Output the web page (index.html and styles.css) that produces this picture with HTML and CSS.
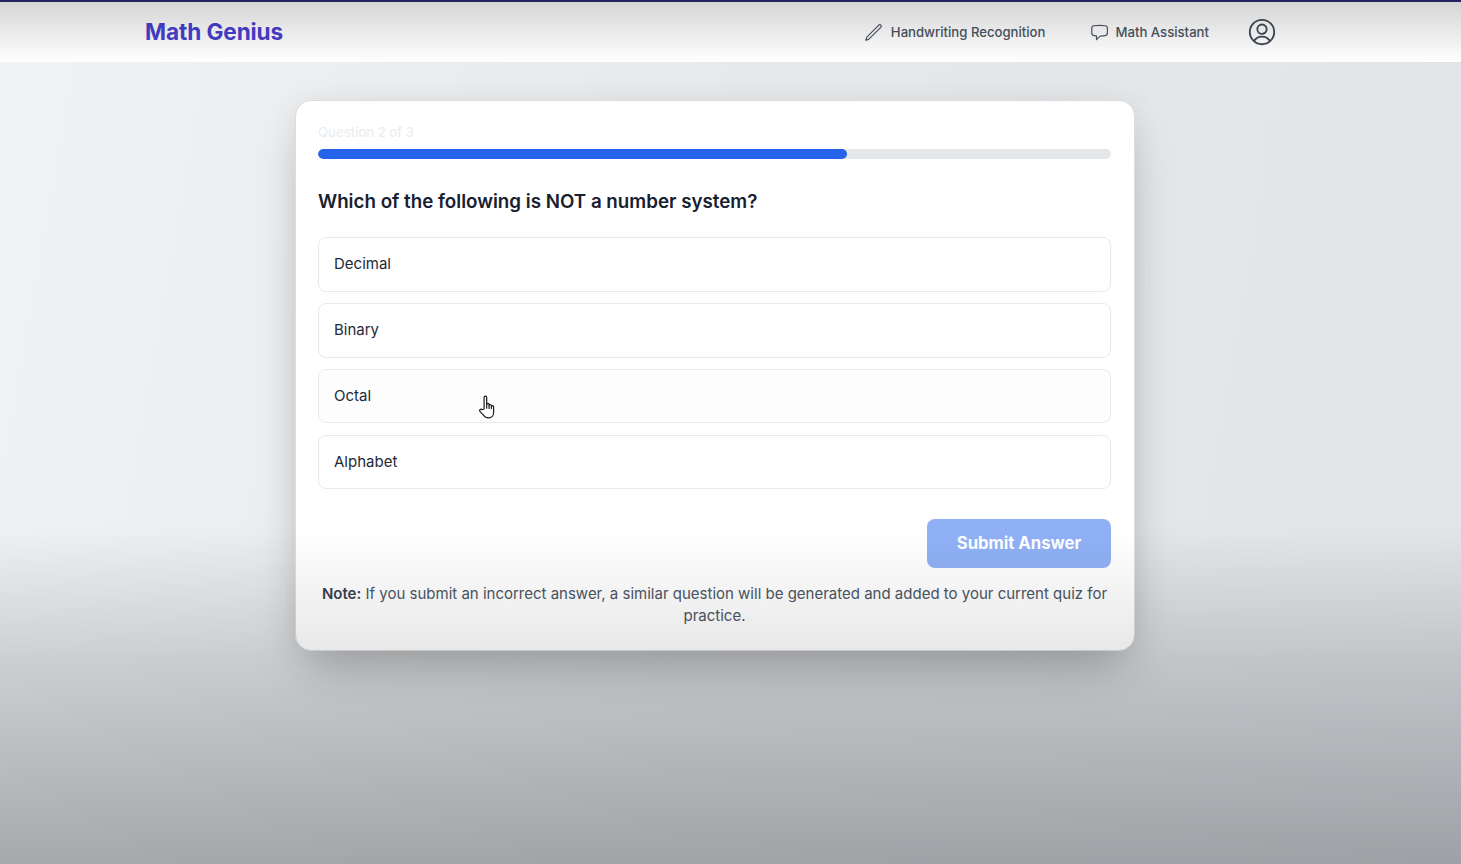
FILE: index.html
```html
<!DOCTYPE html>
<html lang="en">
<head>
<meta charset="utf-8">
<title>Math Genius</title>
<link rel="stylesheet" href="styles.css">
</head>
<body>
<header class="navbar">
  <div class="nav-inner">
    <a class="brand">Math Genius</a>
    <nav class="nav-links">
      <a class="nav-link nav-hand">
        <svg class="nav-icon" viewBox="0 0 24 24" fill="none" stroke="currentColor" stroke-width="1.5" stroke-linecap="round" stroke-linejoin="round"><path d="M16.86 4.49l1.69-1.69a1.88 1.88 0 1 1 2.65 2.65L6.83 19.82a4.5 4.5 0 0 1-1.9 1.13L2.25 21.75l.8-2.68a4.5 4.5 0 0 1 1.13-1.9L16.86 4.49z"/></svg>
        <span>Handwriting Recognition</span>
      </a>
      <a class="nav-link nav-math">
        <svg class="nav-icon" viewBox="0 0 24 24" fill="none" stroke="currentColor" stroke-width="1.5" stroke-linecap="round" stroke-linejoin="round"><path d="M2.25 12.76c0 1.6 1.12 2.99 2.7 3.23 1.08.16 2.17.28 3.27.37V21l4.18-4.18a1.1 1.1 0 0 1 .78-.33c2.05-.05 4.09-.22 6.08-.52 1.58-.23 2.7-1.62 2.7-3.22V6.74c0-1.6-1.12-2.99-2.7-3.23A48.4 48.4 0 0 0 12 3c-2.39 0-4.74.18-7.05.51-1.58.24-2.7 1.63-2.7 3.23v6.02z"/></svg>
        <span>Math Assistant</span>
      </a>
      <a class="nav-user">
        <svg viewBox="0 0 24 24" fill="none" stroke="currentColor" stroke-width="1.5" stroke-linecap="round" stroke-linejoin="round"><path d="M15.75 9.75a3.75 3.75 0 1 1-7.5 0 3.75 3.75 0 0 1 7.5 0z"/><path d="M5.98 18.73A7.49 7.49 0 0 1 12 15.75a7.49 7.49 0 0 1 6.02 2.98"/><circle cx="12" cy="12" r="9.75"/></svg>
      </a>
    </nav>
  </div>
</header>

<main class="page">
  <section class="card">
    <div class="progress-label">Question 2 of 3</div>
    <div class="progress-track"><div class="progress-fill"></div></div>
    <h2 class="question">Which of the following is NOT a number system?</h2>
    <div class="options">
      <button class="option">Decimal</button>
      <button class="option">Binary</button>
      <button class="option option-hover">Octal</button>
      <button class="option">Alphabet</button>
    </div>
    <div class="actions">
      <button class="submit">Submit Answer</button>
    </div>
    <p class="note"><strong>Note:</strong> If you submit an incorrect answer, a similar question will be generated and added to your current quiz for practice.</p>
  </section>
</main>

<div class="shade"></div>

<svg class="cursor" viewBox="0 0 18 24" fill="#fff" stroke="#1a1a1a" stroke-width="1.2" stroke-linejoin="round" stroke-linecap="round"><path d="M5.6 14V2.6c0-2 2.6-2 2.6 0V9.6c0-1.6 2.4-1.6 2.4 0v1c0-1.5 2.3-1.5 2.3 0v1c0-1.4 2.2-1.4 2.2.2v5.8c0 3-2 5.3-5 5.3-2.6 0-4-1-5-2.6L1.4 16.4c-1-1.5.9-2.9 2.2-1.7z"/><path d="M8.2 9.6v3.6M10.6 10.6v2.8M12.9 11.6v2"/></svg>
</body>
</html>
```

FILE: styles.css
```css
* { box-sizing: border-box; }
html, body { margin: 0; height: 100%; }
body {
  width: 1461px;
  height: 864px;
  overflow: hidden;
  position: relative;
  font-family: Inter, "Liberation Sans", sans-serif;
  background:
    linear-gradient(to bottom, rgba(30,50,70,0) 520px, rgba(30,50,70,.06) 660px, rgba(30,50,70,.03) 864px),
    linear-gradient(100deg, #f1f2f3 0%, #e6e8ea 50%, #e2e4e7 100%);
  color: #111827;
}
.navbar {
  height: 62px;
  background: #ffffff;
  border-top: 2px solid #2d2a6e;
}
.nav-inner {
  height: 60px;
  padding: 0 184px 0 145px;
  display: flex;
  align-items: center;
  justify-content: space-between;
}
.brand { margin-bottom: 2px; font-size: 22.6px; font-weight: 700; color: #4840d0; letter-spacing: -0.1px; }
.nav-links { display: flex; align-items: center; color: #4b5563; }
.nav-link { display: flex; align-items: center; gap: 8px; font-size: 13.15px; font-weight: 500; }
.nav-icon { width: 19px; height: 19px; }
.nav-hand { margin-right: 45px; }
.nav-math { margin-right: 38px; gap: 6px; }
.nav-user { display: block; width: 30px; height: 30px; color: #414b58; }
.nav-user svg { display: block; width: 30px; height: 30px; }
.page { display: flex; justify-content: center; padding: 38px 31px 0 0; }
.card {
  width: 840px;
  height: 551px;
  padding: 22px 23px 22px 22px;
  background: #fff;
  border: 1px solid #dcdddf;
  border-radius: 16px;
  box-shadow: 0 25px 50px -12px rgba(0,0,0,.25), 0 0 30px rgba(0,0,0,.05);
}
.progress-label { font-size: 13.1px; line-height: 18px; font-weight: 500; color: #eceef0; }
.progress-track { height: 10px; margin-top: 8px; border-radius: 5px; background: #e5e7eb; overflow: hidden; }
.progress-fill { width: 66.7%; height: 100%; border-radius: 5px; background: #2563eb; }
.question { margin: 30px 0 0; font-size: 18.75px; line-height: 26px; font-weight: 600; color: #182030; }
.options { display: flex; flex-direction: column; gap: 11.35px; margin-top: 22.1px; }
.option {
  display: block;
  width: 100%;
  height: 54.55px;
  padding: 0 15px 2px;
  text-align: left;
  font: 400 15px Inter, "Liberation Sans", sans-serif;
  color: #1f2937;
  background: #fff;
  border: 1px solid #e8e9ec;
  border-radius: 8px;
}
.option-hover { background: #fdfdfe; }
.actions { display: flex; justify-content: flex-end; margin-top: 29.65px; }
.submit {
  width: 184px;
  height: 49px;
  padding: 0;
  font: 700 16.7px Inter, "Liberation Sans", sans-serif;
  color: #fff;
  background: #8fb0f5;
  border: 0;
  border-radius: 8px;
}
.note { margin: 15px 0 0; text-align: center; font-size: 15px; line-height: 22px; color: #4b5563; }
.note strong { font-weight: 600; color: #374151; }
.shade {
  position: absolute;
  inset: 0;
  pointer-events: none;
  background:
    linear-gradient(to bottom, rgba(0,0,0,.17) 0, rgba(0,0,0,.02) 55px, rgba(0,0,0,0) 62px),
    linear-gradient(to bottom, rgba(0,0,0,0) 530px, rgba(0,0,0,.09) 650px, rgba(5,10,15,.29) 864px);
}
.cursor { position: absolute; left: 478px; top: 395px; width: 19px; height: 24px; }
```
